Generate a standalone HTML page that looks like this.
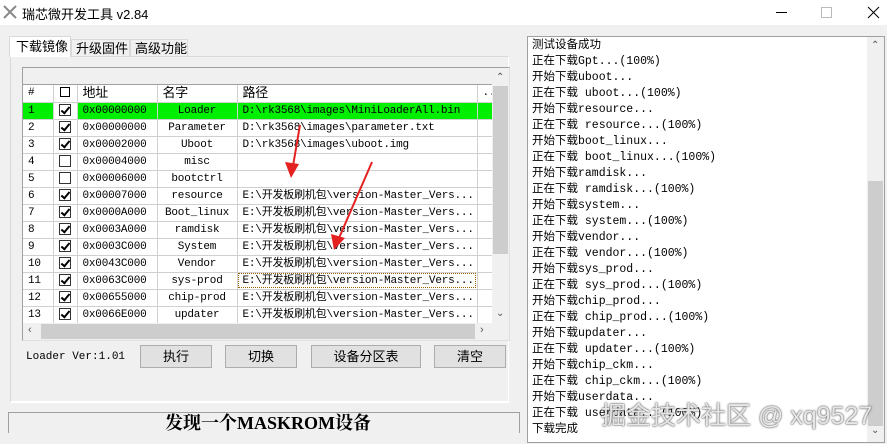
<!DOCTYPE html>
<html><head><meta charset="utf-8"><style>
*{margin:0;padding:0;box-sizing:border-box}
body{width:887px;height:444px;overflow:hidden;background:#f0f0f0;position:relative;font-family:"Liberation Sans","Noto Sans CJK SC",sans-serif;font-size:12px;color:#000}
.a{position:absolute}
.mono{font-family:"Liberation Mono","Noto Serif CJK SC",monospace;font-size:11px}
table{border-collapse:collapse;table-layout:fixed}
td{height:17px;line-height:16px;border-right:1px solid #d0d0d0;border-bottom:1px solid #d0d0d0;white-space:nowrap;overflow:hidden;padding:0 0 0 5px;font-family:"Liberation Mono","Noto Sans CJK SC",monospace;font-size:11px;letter-spacing:-0.2px}
td.c{text-align:center;padding:0}
.cb{display:inline-block;width:12px;height:12px;border:1px solid #333;background:#fff;vertical-align:middle;position:relative}
.cb.k::after{content:"";position:absolute;left:3px;top:0px;width:3px;height:7px;border:solid #000;border-width:0 2px 2px 0;transform:rotate(40deg)}
.btn{position:absolute;top:345px;height:23px;background:#e1e1e1;border:1px solid #adadad;text-align:center;line-height:21px;font-size:13px}
.log div{height:16px;line-height:16px;font-family:"Liberation Mono","Noto Sans CJK SC",monospace;font-size:11.5px;white-space:nowrap}
.tab{position:absolute;white-space:nowrap;font-size:13px}
</style></head><body>
<div class="a" style="left:0;top:0;width:887px;height:25px;background:#fff"></div>
<svg class="a" style="left:2px;top:4px" width="16" height="16"><path d="M2 2 L14 14 M14 2 L2 14" stroke="#888" stroke-width="2"/></svg>
<div class="a" style="left:22px;top:4px;font-size:13px">瑞芯微开发工具 v2.84</div>
<div class="a" style="left:776px;top:12px;width:11px;height:1px;background:#000"></div>
<div class="a" style="left:821px;top:7px;width:11px;height:11px;border:1px solid #bbb"></div>
<svg class="a" style="left:867px;top:6px" width="13" height="13"><path d="M1 1L12 12M12 1L1 12" stroke="#000" stroke-width="1"/></svg>

<div class="a" style="left:10px;top:56px;width:499px;height:347px;border:1px solid #d9d9d9;background:#f0f0f0;border-right-color:#fff;border-bottom:2px solid #fff"></div>
<div class="tab" style="left:9px;top:36px;width:62px;height:21px;background:#fff;border:1px solid #d9d9d9;border-bottom:none;padding-left:6px;line-height:20px">下载镜像</div>
<div class="tab" style="left:71px;top:39px;width:59px;height:18px;border:1px solid #d9d9d9;padding-left:4px;line-height:17px">升级固件</div>
<div class="tab" style="left:130px;top:39px;width:58px;height:18px;border:1px solid #d9d9d9;padding-left:4px;line-height:17px">高级功能</div>

<div class="a" style="left:22px;top:67px;width:488px;height:274px;border:1px solid #a0a0a0;border-right-color:#e0e0e0;border-bottom-color:#e0e0e0;background:#fff;overflow:hidden">
<div style="height:17px;border-bottom:1px solid #a0a0a0;width:470px;background:#f0f0f0"></div>
<table style="width:470px">
<colgroup><col style="width:30px"><col style="width:24px"><col style="width:80px"><col style="width:80px"><col style="width:240px"><col style="width:16px"></colgroup>
<tr style="background:#fff"><td>#</td><td class="c"><span style="display:inline-block;width:10px;height:10px;border:1px solid #000;vertical-align:middle"></span></td><td style="font-family:'Liberation Sans','Noto Sans CJK SC',sans-serif;font-size:13px">地址</td><td style="font-family:'Liberation Sans','Noto Sans CJK SC',sans-serif;font-size:13px">名字</td><td style="font-family:'Liberation Sans','Noto Sans CJK SC',sans-serif;font-size:13px">路径</td><td>..</td></tr>
<tr style="background:#00ee00"><td>1</td><td class="c" style="background:#fff"><span class="cb k"></span></td><td>0x00000000</td><td class="c">Loader</td><td>D:\rk3568\images\MiniLoaderAll.bin</td><td></td></tr>
<tr><td>2</td><td class="c"><span class="cb k"></span></td><td>0x00000000</td><td class="c">Parameter</td><td>D:\rk3568\images\parameter.txt</td><td></td></tr>
<tr><td>3</td><td class="c"><span class="cb k"></span></td><td>0x00002000</td><td class="c">Uboot</td><td>D:\rk3568\images\uboot.img</td><td></td></tr>
<tr><td>4</td><td class="c"><span class="cb"></span></td><td>0x00004000</td><td class="c">misc</td><td></td><td></td></tr>
<tr><td>5</td><td class="c"><span class="cb"></span></td><td>0x00006000</td><td class="c">bootctrl</td><td></td><td></td></tr>
<tr><td>6</td><td class="c"><span class="cb k"></span></td><td>0x00007000</td><td class="c">resource</td><td>E:\开发板刷机包\version-Master_Vers...</td><td></td></tr>
<tr><td>7</td><td class="c"><span class="cb k"></span></td><td>0x0000A000</td><td class="c">Boot_linux</td><td>E:\开发板刷机包\version-Master_Vers...</td><td></td></tr>
<tr><td>8</td><td class="c"><span class="cb k"></span></td><td>0x0003A000</td><td class="c">ramdisk</td><td>E:\开发板刷机包\version-Master_Vers...</td><td></td></tr>
<tr><td>9</td><td class="c"><span class="cb k"></span></td><td>0x0003C000</td><td class="c">System</td><td>E:\开发板刷机包\version-Master_Vers...</td><td></td></tr>
<tr><td>10</td><td class="c"><span class="cb k"></span></td><td>0x0043C000</td><td class="c">Vendor</td><td>E:\开发板刷机包\version-Master_Vers...</td><td></td></tr>
<tr><td>11</td><td class="c"><span class="cb k"></span></td><td>0x0063C000</td><td class="c">sys-prod</td><td style="outline:1px dotted #a06000;outline-offset:-2px">E:\开发板刷机包\version-Master_Vers...</td><td></td></tr>
<tr><td>12</td><td class="c"><span class="cb k"></span></td><td>0x00655000</td><td class="c">chip-prod</td><td>E:\开发板刷机包\version-Master_Vers...</td><td></td></tr>
<tr><td>13</td><td class="c"><span class="cb k"></span></td><td>0x0066E000</td><td class="c">updater</td><td>E:\开发板刷机包\version-Master_Vers...</td><td></td></tr>
</table>
</div>
<div class="a" style="left:492px;top:68px;width:17px;height:255px;background:#f0f0f0"></div>
<div class="a" style="left:493px;top:86px;width:15px;height:168px;background:#cdcdcd"></div>
<div class="a" style="left:496px;top:72px;font-size:10px;color:#555">&#8963;</div>
<div class="a" style="left:496px;top:308px;font-size:10px;color:#555">&#8964;</div>
<div class="a" style="left:23px;top:323px;width:486px;height:17px;background:#f0f0f0"></div>
<div class="a" style="left:41px;top:324px;width:434px;height:15px;background:#cdcdcd"></div>
<div class="a" style="left:28px;top:324px;font-size:11px;color:#555">&lsaquo;</div>
<div class="a" style="left:480px;top:324px;font-size:11px;color:#555">&rsaquo;</div>

<div class="a mono" style="left:26px;top:351px;font-size:11px">Loader Ver:1.01</div>
<div class="btn" style="left:140px;width:72px">执行</div>
<div class="btn" style="left:225px;width:72px">切换</div>
<div class="btn" style="left:311px;width:110px">设备分区表</div>
<div class="btn" style="left:434px;width:72px">清空</div>

<div class="a" style="left:8px;top:412px;width:512px;height:21px;border:1px solid #a0a0a0;border-bottom:none;overflow:hidden;text-align:center">
<div style="font-family:'Liberation Serif','Noto Serif CJK SC',serif;font-weight:bold;font-size:18px;line-height:24px;margin-top:-2px;padding-left:8px">发现一个MASKROM设备</div></div>

<svg class="a" style="left:0;top:0" width="520" height="300">
<path d="M300 125 L293 166" stroke="#e52020" stroke-width="2"/>
<path d="M285 162 L291 178 L299 164 Z" fill="#e52020"/>
<path d="M372 162 L339 238" stroke="#e52020" stroke-width="2"/>
<path d="M331 234 L334 250 L345 238 Z" fill="#e52020"/>
</svg>

<div class="a log" style="left:527px;top:36px;width:358px;height:407px;background:#fff;border:1px solid #a0a0a0;padding:1px 0 0 4px;overflow:hidden">
<div>测试设备成功</div><div>正在下载Gpt...(100%)</div><div>开始下载uboot...</div><div>正在下载 uboot...(100%)</div><div>开始下载resource...</div><div>正在下载 resource...(100%)</div><div>开始下载boot_linux...</div><div>正在下载 boot_linux...(100%)</div><div>开始下载ramdisk...</div><div>正在下载 ramdisk...(100%)</div><div>开始下载system...</div><div>正在下载 system...(100%)</div><div>开始下载vendor...</div><div>正在下载 vendor...(100%)</div><div>开始下载sys_prod...</div><div>正在下载 sys_prod...(100%)</div><div>开始下载chip_prod...</div><div>正在下载 chip_prod...(100%)</div><div>开始下载updater...</div><div>正在下载 updater...(100%)</div><div>开始下载chip_ckm...</div><div>正在下载 chip_ckm...(100%)</div><div>开始下载userdata...</div><div>正在下载 userdata...(100%)</div><div>下载完成</div>
</div>
<div class="a" style="left:867px;top:37px;width:17px;height:405px;background:#f0f0f0"></div>
<div class="a" style="left:868px;top:181px;width:15px;height:245px;background:#cdcdcd"></div>
<div class="a" style="left:871px;top:40px;font-size:10px;color:#555">&#8963;</div>
<div class="a" style="left:871px;top:425px;font-size:10px;color:#555">&#8964;</div>

<div class="a" style="left:601px;top:396px;font-size:25px;color:rgba(255,255,255,0.85);text-shadow:0 0 1px #555,0 0 2px #555;white-space:nowrap">掘金技术社区 @ xq9527</div>
</body></html>
